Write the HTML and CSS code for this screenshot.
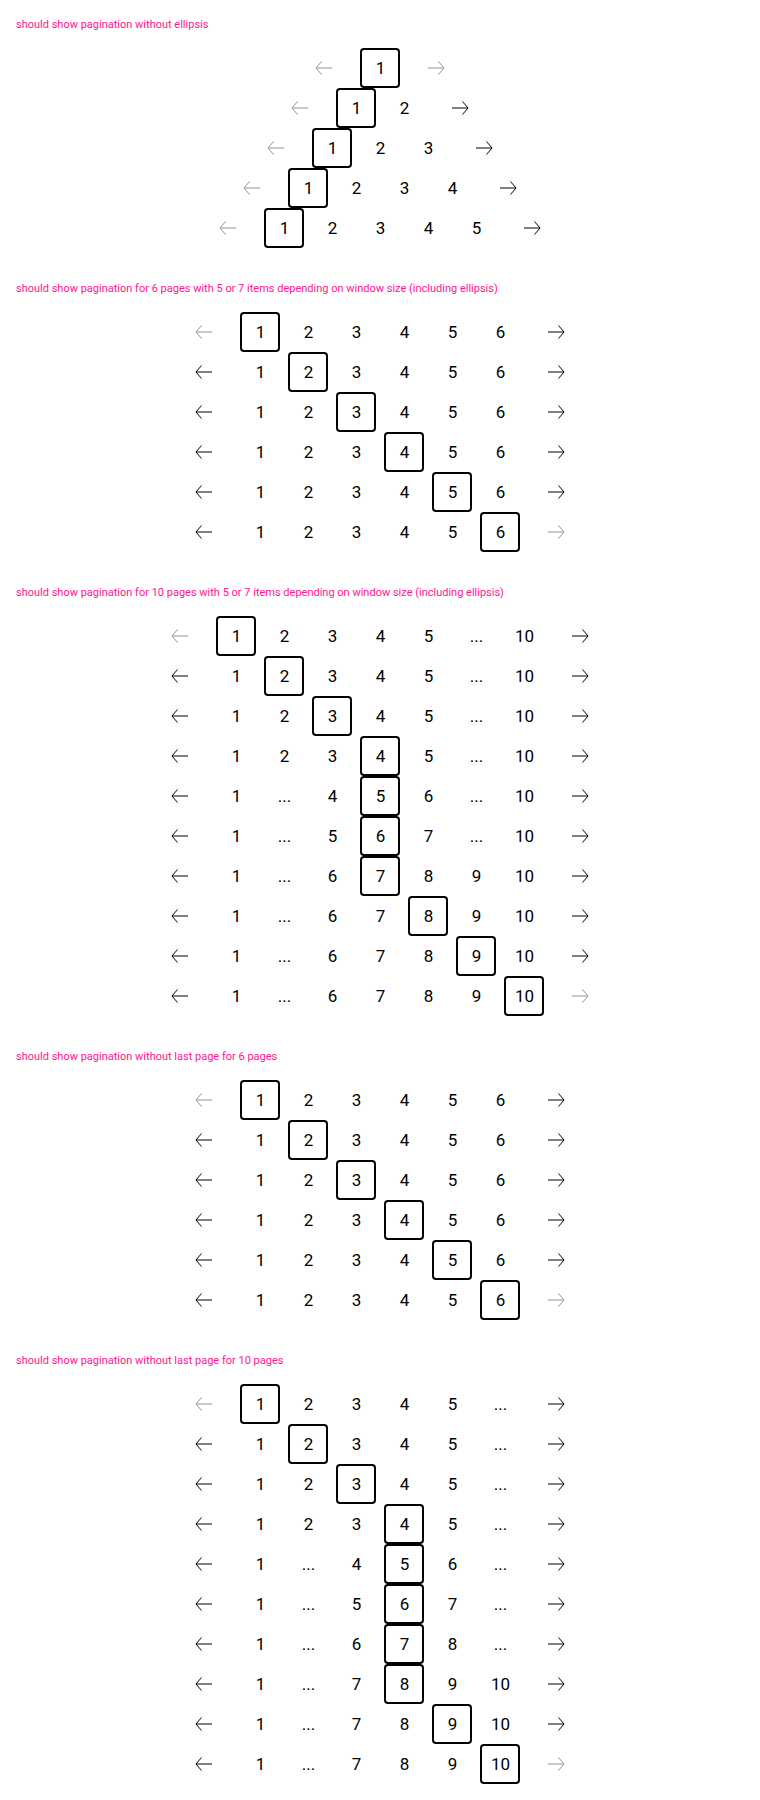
FILE: index.html
```html
<!DOCTYPE html>
<html lang="en">
<head>
<meta charset="utf-8">
<meta name="viewport" content="width=device-width, initial-scale=1">
<title>Pagination</title>
<link rel="stylesheet" href="styles.css">
</head>
<body>
<main>
  <section class="story" data-totals="1,2,3,4,5">
    <h2 class="story-title">should show pagination without ellipsis</h2>
  </section>
  <section class="story" data-total="6">
    <h2 class="story-title">should show pagination for 6 pages with 5 or 7 items depending on window size (including ellipsis)</h2>
  </section>
  <section class="story" data-total="10">
    <h2 class="story-title">should show pagination for 10 pages with 5 or 7 items depending on window size (including ellipsis)</h2>
  </section>
  <section class="story" data-total="6" data-hide-last>
    <h2 class="story-title">should show pagination without last page for 6 pages</h2>
  </section>
  <section class="story" data-total="10" data-hide-last>
    <h2 class="story-title">should show pagination without last page for 10 pages</h2>
  </section>
</main>
<script src="pagination.js"></script>
</body>
</html>
```

FILE: styles.css
```css
* {
  box-sizing: border-box;
}

body {
  margin: 0;
  background: #fff;
  color: #000;
  font-family: Roboto, sans-serif;
}

.story {
  padding: 16px;
}

.story-title {
  margin: 0 0 14px;
  color: #ff1493;
  font-size: 11px;
  font-weight: 400;
  line-height: 18px;
}

.pagination {
  display: flex;
  justify-content: center;
  gap: 16px;
}

.pages {
  display: flex;
  gap: 8px;
  margin: 0;
  padding: 0;
  list-style: none;
}

.page,
.arrow {
  display: flex;
  align-items: center;
  justify-content: center;
  width: 40px;
  height: 40px;
  padding: 0;
  border: 2px solid transparent;
  border-radius: 4px;
  background: none;
  color: #000;
  font-family: inherit;
  font-size: 17px;
  line-height: 24px;
}

.page {
  padding-left: 1px;
}

.page-current {
  border-color: #000;
}

.arrow:disabled {
  color: #919191;
}

.arrow svg {
  flex: none;
  width: 24px;
  height: 24px;
  fill: none;
  stroke: currentColor;
}
```

FILE: pagination.js
```javascript
const ARROWS = {
  Previous: 'M20 12H4M9.5 5.5L4 12l5.5 6.5',
  Next: 'M4 12h16M14.5 5.5L20 12l-5.5 6.5',
};

function range(from, to) {
  return Array.from({ length: to - from + 1 }, (_, i) => from + i);
}

function visiblePages(total, current, hideLast) {
  if (total <= 6) return range(1, total);
  const tail = hideLast ? ['...'] : ['...', total];
  const lastBlock = hideLast ? 3 : 4;
  if (current <= 4) return [...range(1, 5), ...tail];
  if (current > total - lastBlock) return [1, '...', ...range(total - lastBlock, total)];
  return [1, '...', ...range(current - 1, current + 1), ...tail];
}

function arrow(label, disabled) {
  return `<button class="arrow" type="button" aria-label="${label} page"${disabled ? ' disabled' : ''}>
    <svg viewBox="0 0 24 24" aria-hidden="true"><path d="${ARROWS[label]}"/></svg>
  </button>`;
}

function page(item, current) {
  if (item === '...') return '<li><span class="page">...</span></li>';
  const state = item === current ? ' page-current" aria-current="page' : '';
  return `<li><button class="page${state}" type="button">${item}</button></li>`;
}

function pagination(total, current, hideLast) {
  const nav = document.createElement('nav');
  nav.className = 'pagination';
  nav.setAttribute('aria-label', `Page ${current} of ${total}`);
  nav.innerHTML = arrow('Previous', current === 1)
    + `<ul class="pages">${visiblePages(total, current, hideLast).map((p) => page(p, current)).join('')}</ul>`
    + arrow('Next', current === total);
  return nav;
}

document.querySelectorAll('.story').forEach((story) => {
  const { totals, total } = story.dataset;
  const hideLast = 'hideLast' in story.dataset;
  const rows = totals
    ? totals.split(',').map((t) => pagination(Number(t), 1, false))
    : range(1, Number(total)).map((current) => pagination(Number(total), current, hideLast));
  story.append(...rows);
});
```
